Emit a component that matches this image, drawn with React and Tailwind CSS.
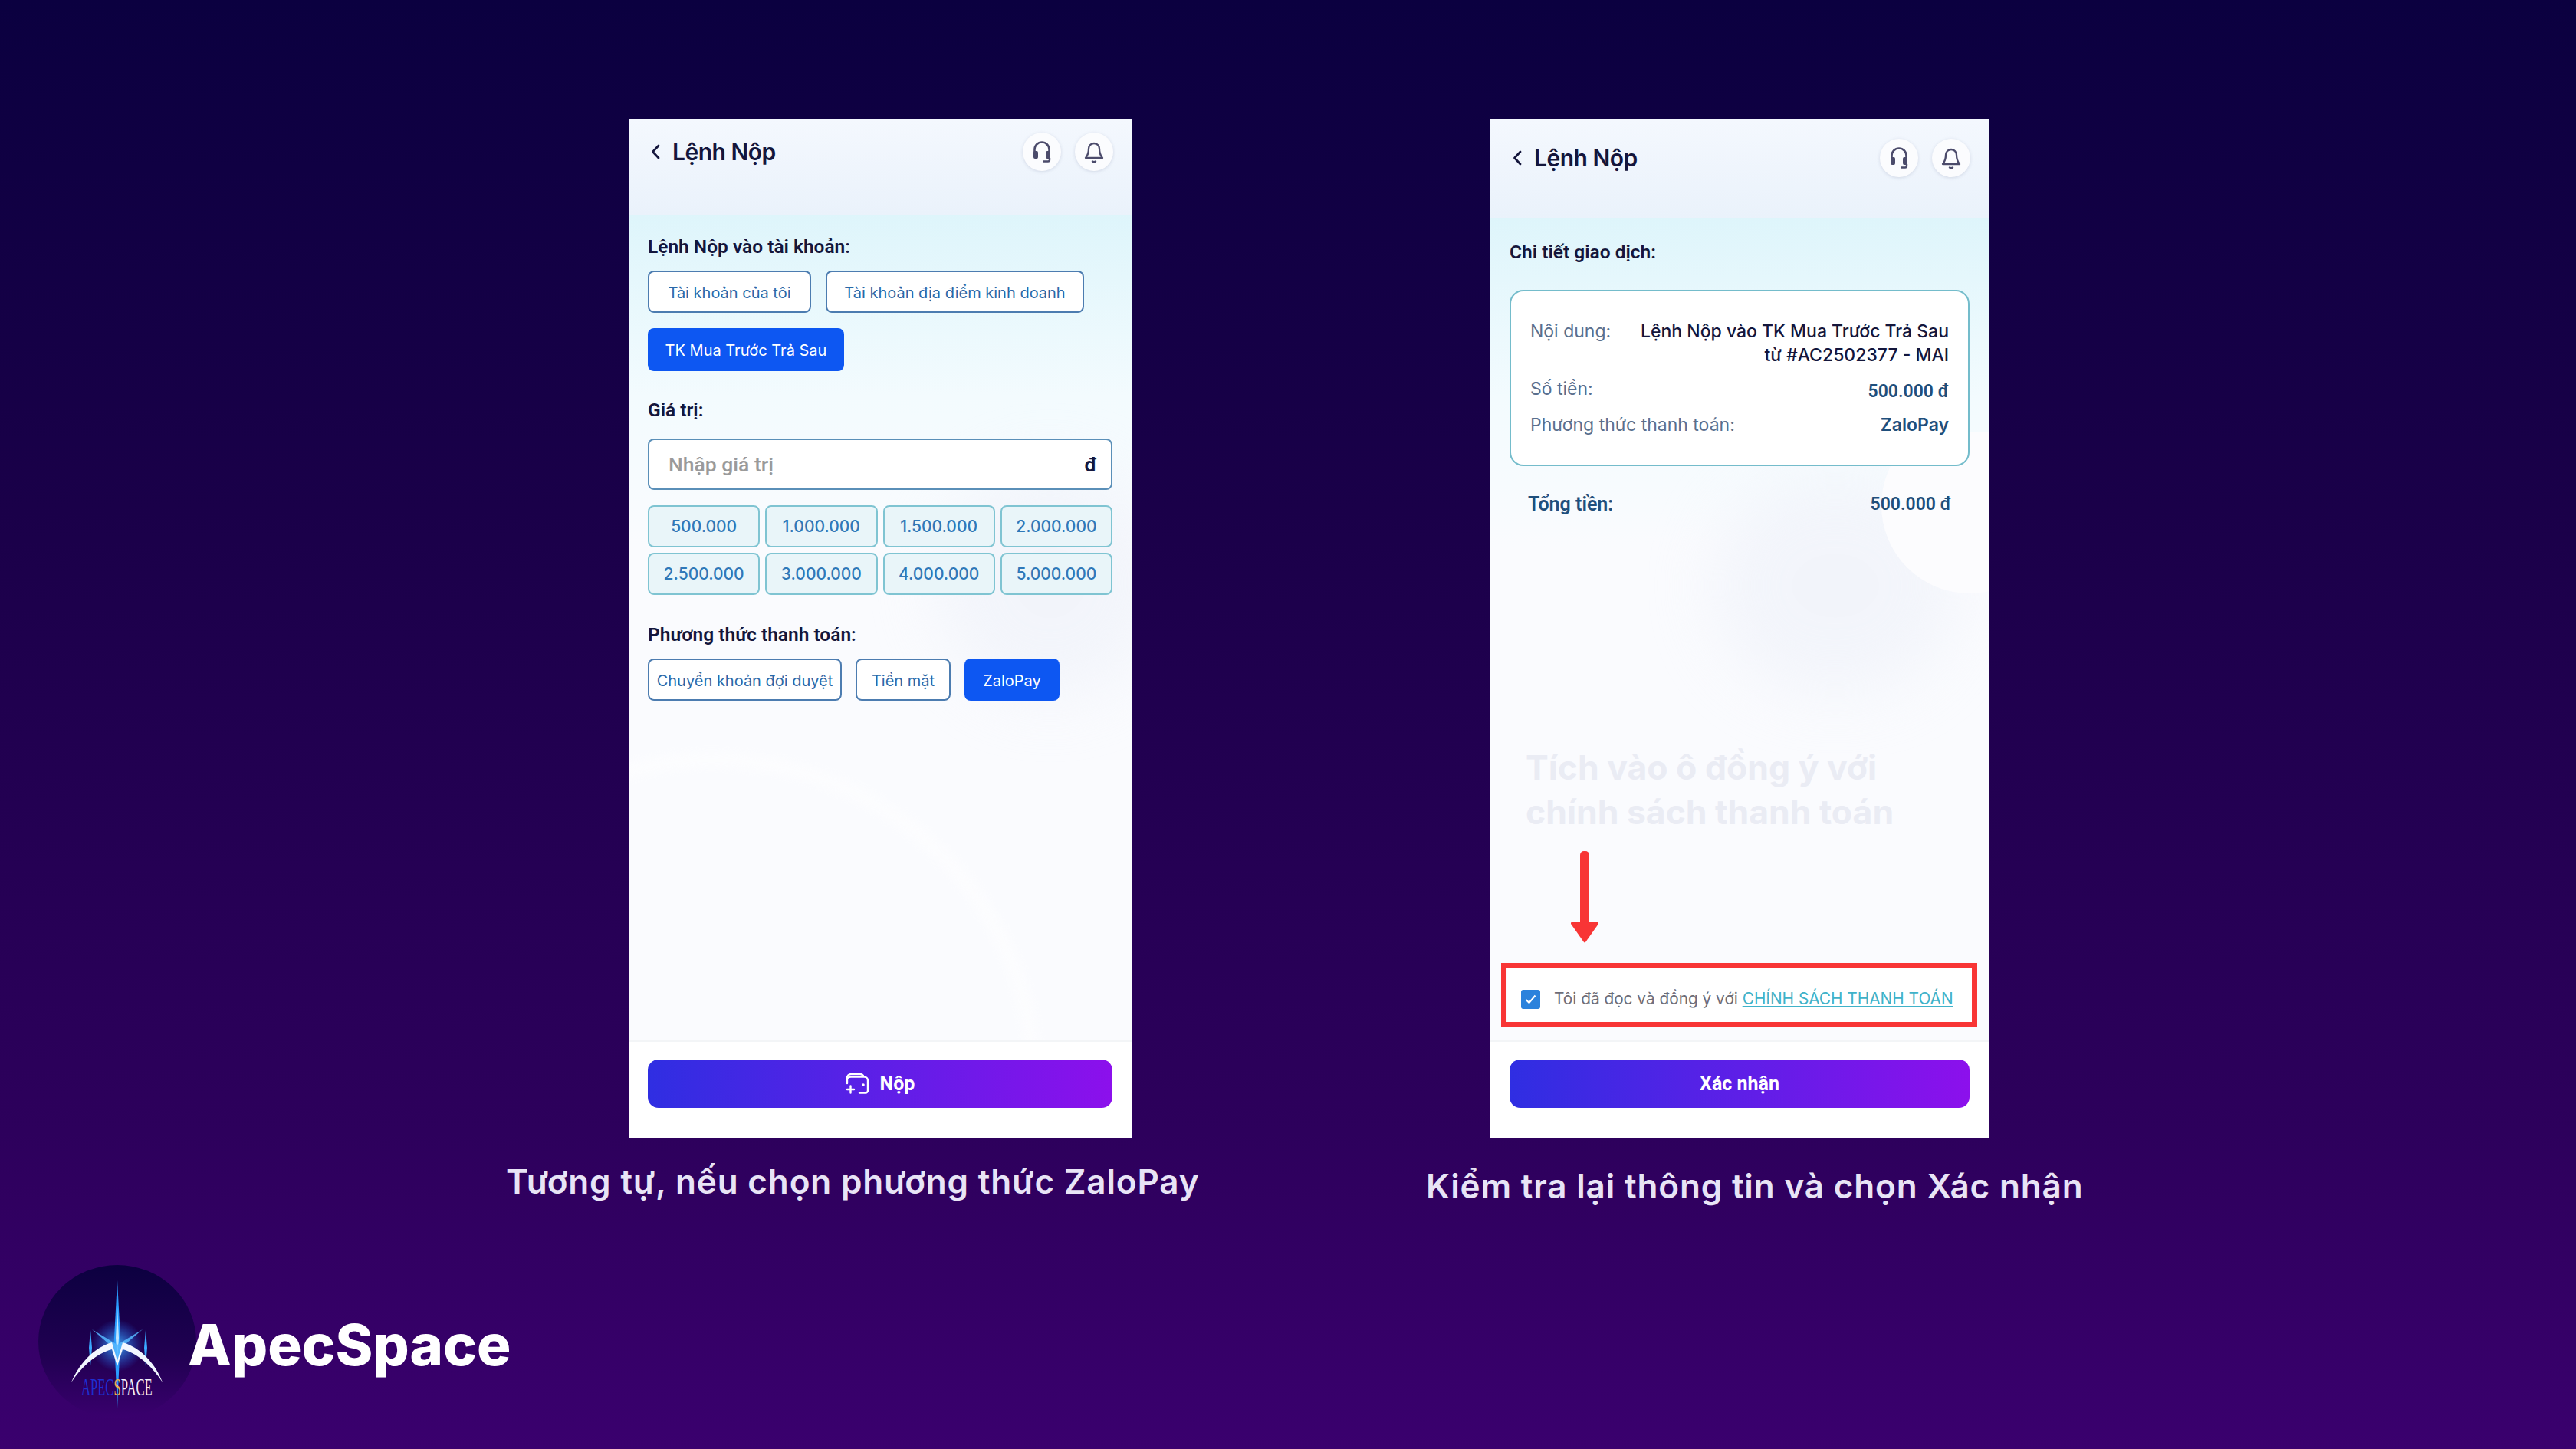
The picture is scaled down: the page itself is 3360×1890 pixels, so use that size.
const LABEL = "font-['Roboto',sans-serif] font-semibold text-[24.500px] leading-[30px] text-[#14163c]";
const PILL = "flex h-[55px] items-center justify-center rounded-[8px] text-[20px] font-['Inter',sans-serif]";
const OUTLINE = "border-2 border-[#4c7cb0] bg-white pt-[2px] text-[#2a68a8]";
const ACTIVE = "bg-[#0d57f2] pt-[2px] text-white";
const CAPTION = "whitespace-nowrap font-['Inter',sans-serif] text-[44px] font-semibold leading-[50px] tracking-[0.85px] text-[#e8e4f6]";

const HeadsetIcon = () => (
  <svg width="26" height="30" viewBox="0 0 26 30" fill="none">
    <path d="M3.500 17V12a9.500 9.500 0 0 1 19 0v5" stroke="#4b4b6b" strokeWidth="2.600" />
    <rect x="2" y="14" width="6" height="10" rx="2" fill="#4b4b6b" />
    <rect x="18" y="14" width="6" height="10" rx="2" fill="#4b4b6b" />
    <path d="M23 23v2.500a2 2 0 0 1-2 2h-6" stroke="#4b4b6b" strokeWidth="2.400" />
  </svg>
);

const BellIcon = () => (
  <svg width="28" height="30" viewBox="0 0 28 30" fill="none" stroke="#4b4b6b" strokeWidth="2.300" strokeLinejoin="round" strokeLinecap="round">
    <path d="M7 11a7 7 0 0 1 14 0c0 6 1.500 9 4 12H3c2.500-3 4-6 4-12Z" />
    <path d="M12 27.500c1.200.8 2.800.8 4 0" />
  </svg>
);

const WalletIcon = () => (
  <svg width="31" height="29" viewBox="0 0 31 29" fill="none" stroke="white" strokeWidth="2.400" strokeLinecap="round" strokeLinejoin="round">
    <path d="M2 14V7a5 5 0 0 1 5-5h12a5 5 0 0 1 4 2" />
    <path d="M3 7c1-1 2.500-1.500 4-1.500h17a5 5 0 0 1 5 5v13a3 3 0 0 1-3 3h-8" />
    <path d="M2 22h9M6.500 17.500v9" />
    <circle cx="23" cy="16" r="1.800" fill="white" stroke="none" />
  </svg>
);

const Header = ({ height, top }) => (
  <div
    className={`flex shrink-0 items-start justify-between bg-[linear-gradient(180deg,#f4f8fe,#eaf2fb)] pl-[29px] pr-[24px] ${height} ${top}`}
  >
    <div className="flex h-[50px] items-center gap-[16px]">
      <svg width="12" height="20" viewBox="0 0 12 20" fill="none" stroke="#14163c" strokeWidth="2.800" strokeLinecap="round" strokeLinejoin="round">
        <path d="M10 2 2.500 10l7.500 8" />
      </svg>
      <span className="font-['Inter',sans-serif] text-[30px] font-semibold tracking-[-0.5px] text-[#14163c]">
        Lệnh Nộp
      </span>
    </div>
    <div className="flex gap-[18px]">
      <div className="flex h-[50px] w-[50px] items-center justify-center rounded-full bg-[#fbfcfe] shadow-[0_1px_4px_rgba(80,90,130,0.18)]">
        <HeadsetIcon />
      </div>
      <div className="flex h-[50px] w-[50px] items-center justify-center rounded-full bg-[#fbfcfe] shadow-[0_1px_4px_rgba(80,90,130,0.18)]">
        <BellIcon />
      </div>
    </div>
  </div>
);

const Footer = ({ children }) => (
  <div className="h-[127px] shrink-0 border-t-2 border-[#f3f5f7] bg-white px-[25px] pt-[23px]">
    <div className="flex h-[63px] items-center justify-center gap-[14px] rounded-[14px] bg-[linear-gradient(90deg,#2f2ee2,#8c10ec)] font-['Roboto',sans-serif] text-[25px] font-bold text-white">
      {children}
    </div>
  </div>
);

const amounts = ["500.000", "1.000.000", "1.500.000", "2.000.000", "2.500.000", "3.000.000", "4.000.000", "5.000.000"];

const DepositPhone = () => (
  <div className="flex h-[1329px] w-[656px] flex-col bg-white">
    <Header height="h-[125px]" top="pt-[18px]" />
    <div className="relative flex-1 overflow-hidden bg-[linear-gradient(180deg,#def5fb_0%,#f3fbfe_22%,#fafbfe_40%,#fafbfe_100%)]">
      {/* faint background shapes */}
      <div className="absolute left-[400px] top-[330px] h-[300px] w-[300px] rounded-full bg-[#eef1f9] opacity-60 blur-[40px]" />
      <div className="absolute left-[-320px] top-[700px] h-[900px] w-[860px] rounded-full border-[22px] border-white opacity-40 blur-[6px]" />
      <div className="relative px-[25px] pt-[27px]">
        <div className={LABEL}>Lệnh Nộp vào tài khoản:</div>
        <div className="mt-[16px] flex flex-wrap gap-x-[19px] gap-y-[20px]">
          <div className={`${PILL} ${OUTLINE} w-[213px]`}>Tài khoản của tôi</div>
          <div className={`${PILL} ${OUTLINE} w-[337px]`}>Tài khoản địa điểm kinh doanh</div>
          <div className={`${PILL} ${ACTIVE} h-[56px] w-[256px] text-[19.500px]`}>TK Mua Trước Trả Sau</div>
        </div>
        <div className={`${LABEL} mt-[36px]`}>Giá trị:</div>
        <div className="mt-[22px] flex h-[67px] items-center justify-between rounded-[8px] border-2 border-[#5a8fb8] bg-white pl-[25px] pr-[18px] font-['Roboto',sans-serif] text-[26.500px]">
          <span className="font-medium text-[#9a9a9a]">Nhập giá trị</span>
          <span className="font-semibold text-[#14163c]">đ</span>
        </div>
        <div className="mt-[20px] grid grid-cols-4 gap-x-[7px] gap-y-[7px]">
          {amounts.map((a) => (
            <div
              key={a}
              className={`${PILL} border-2 border-[#7fc4d2] bg-[#e9f5f9] !text-[21px] font-medium text-[#2f78b8]`}
            >
              {a}
            </div>
          ))}
        </div>
        <div className={`${LABEL} mt-[37px]`}>Phương thức thanh toán:</div>
        <div className="mt-[16px] flex gap-[18px]">
          <div className={`${PILL} ${OUTLINE} w-[253px] text-[19.500px]`}>Chuyển khoản đợi duyệt</div>
          <div className={`${PILL} ${OUTLINE} w-[124px]`}>Tiền mặt</div>
          <div className={`${PILL} ${ACTIVE} w-[124px]`}>ZaloPay</div>
        </div>
      </div>
    </div>
    <Footer>
      <WalletIcon />
      Nộp
    </Footer>
  </div>
);

const ConfirmPhone = () => (
  <div className="flex h-[1329px] w-[650px] flex-col bg-white">
    <Header height="h-[129px]" top="pt-[26px]" />
    <div className="relative flex flex-1 flex-col bg-[linear-gradient(180deg,#def5fb_0%,#f3fbfe_22%,#fafbfe_40%,#fafbfe_100%)]">
      {/* faint background shapes */}
      <div className="absolute right-0 top-[280px] h-[420px] w-[450px] overflow-hidden">
        <div className="absolute left-[90px] top-[60px] h-[280px] w-[320px] rounded-full bg-[#eef1f9] opacity-60 blur-[40px]" />
        <div className="absolute left-[310px] top-[-20px] h-[230px] w-[230px] rounded-full bg-[#fcfcfe]" />
      </div>
      <div className="relative px-[25px] pt-[30px]">
        <div className={LABEL}>Chi tiết giao dịch:</div>
        <div className="mt-[34px] h-[230px] rounded-[18px] border-2 border-[#74bccb] bg-white px-[25px] pt-[37px] font-['Inter',sans-serif] text-[23px] leading-[31px]">
          <div className="flex justify-between">
            <span className="text-[#5a6f8e]">Nội dung:</span>
            <span className="w-[410px] text-right font-medium text-[#14163c]">
              Lệnh Nộp vào TK Mua Trước Trả Sau từ #AC2502377 - MAI
            </span>
          </div>
          <div className="mt-[13px] flex justify-between">
            <span className="text-[#5a6f8e]">Số tiền:</span>
            <span className="mt-[3px] font-['Roboto',sans-serif] font-semibold text-[#1f4f7c]">500.000 đ</span>
          </div>
          <div className="mt-[13px] flex justify-between">
            <span className="text-[#5a6f8e]">Phương thức thanh toán:</span>
            <span className="font-semibold text-[#1f4f7c]">ZaloPay</span>
          </div>
        </div>
        <div className="mt-[35px] flex justify-between px-[24px] font-['Roboto',sans-serif] text-[25px] font-semibold leading-[30px] text-[#1f4f7c]">
          <span>Tổng tiền:</span>
          <span className="text-[23px]">500.000 đ</span>
        </div>
      </div>

      <div className="absolute left-[46px] top-[688px] whitespace-nowrap font-['Inter',sans-serif] text-[44.500px] font-bold leading-[58px] text-[#eaecf4]">
        Tích vào ô đồng ý với
        <br />
        chính sách thanh toán
      </div>
      <svg className="absolute left-[105px] top-[826px]" width="36" height="120" viewBox="0 0 36 120" fill="#f83535">
        <rect x="12" y="0" width="12" height="100" rx="5" />
        <path d="M1 93h34a1.500 1.500 0 0 1 1 2L19 119a1.500 1.500 0 0 1-2 0L0 95a1.500 1.500 0 0 1 1-2Z" />
      </svg>

      <div className="relative mx-[22px] mb-[24px] mt-auto flex h-[70px] items-center bg-white pl-[18px] pt-[10px] font-['Inter',sans-serif] text-[20.800px] text-[#6d6d78]">
        <div className="absolute -bottom-[7px] -left-[8px] -right-[7px] -top-[7px] border-[7px] border-[#f83535]" />
        <div className="flex h-[25px] w-[25px] items-center justify-center rounded-[3px] bg-[#2b82dc]">
          <svg width="15" height="13" viewBox="0 0 15 13" fill="none" stroke="white" strokeWidth="2">
            <path d="M1.500 7 5.500 11 13.500 1.500" />
          </svg>
        </div>
        <span className="ml-[18px] whitespace-nowrap">
          Tôi đã đọc và đồng ý với{" "}
          <span className="text-[#3fb2c9] underline">CHÍNH SÁCH THANH TOÁN</span>
        </span>
      </div>
    </div>
    <Footer>Xác nhận</Footer>
  </div>
);

const Logo = () => (
  <svg width="206" height="200" viewBox="0 0 206 200" className="shrink-0">
    <defs>
      <linearGradient id="disc" x1="0" y1="0" x2="0" y2="1">
        <stop offset="0" stopColor="#0c0040" />
        <stop offset="0.6" stopColor="#210052" />
        <stop offset="1" stopColor="#3a006e" />
      </linearGradient>
      <radialGradient id="glow">
        <stop offset="0" stopColor="#3fb6ff" stopOpacity="0.9" />
        <stop offset="1" stopColor="#1f6cff" stopOpacity="0" />
      </radialGradient>
    </defs>
    <ellipse cx="103" cy="100" rx="103" ry="100" fill="url(#disc)" />
    <circle cx="103" cy="105" r="34" fill="url(#glow)" />
    <path d="M103 20 107 95 103 187 99 95Z" fill="#2a9dff" />
    <path d="M103 55 105 95 103 125 101 95Z" fill="#bfe6ff" />
    <path d="M68 85 70 108 68 132 66 108Z M140 85 142 108 140 132 138 108Z" fill="#3aa8ff" />
    <path d="M70 84 103 104 136 84 108 108 103 130 98 108Z" fill="#56b8ff" opacity="0.85" />
    <path d="M43 153C55 125 75 107 96 101L103 125 110 101C131 107 151 125 162 153 146 129 128 115 110 110L103 132 96 110C78 115 59 129 43 153Z" fill="#f2f7ff" />
    <g transform="translate(56 170) scale(0.519 1)">
      <text fontFamily="'Liberation Serif',serif" fontSize="32">
        <tspan fill="#1d2fd0">APEC</tspan>
        <tspan fill="#eeb04e">S</tspan>
        <tspan fill="#f4f0fa">PACE</tspan>
      </text>
    </g>
  </svg>
);

export default function App() {
  return (
    <div className="flex h-[1890px] w-[3360px] flex-col overflow-hidden bg-[linear-gradient(180deg,#0b0040_0%,#1a0049_35%,#2d005c_78%,#3a006e_100%)]">
      <div className="flex pl-[820px] pt-[155px]">
        <div className="w-[656px]">
          <DepositPhone />
          <div className={`${CAPTION} ml-[-160px] mt-[32px]`}>Tương tự, nếu chọn phương thức ZaloPay</div>
        </div>
        <div className="ml-[468px] w-[650px]">
          <ConfirmPhone />
          <div className={`${CAPTION} ml-[-84px] mt-[38px]`}>Kiểm tra lại thông tin và chọn Xác nhận</div>
        </div>
      </div>
      <div className="mt-auto flex items-center pb-[40px] pl-[50px]">
        <Logo />
        <span className="ml-[-11px] mt-[8px] font-['Inter',sans-serif] text-[74px] font-extrabold text-white">ApecSpace</span>
      </div>
    </div>
  );
}
